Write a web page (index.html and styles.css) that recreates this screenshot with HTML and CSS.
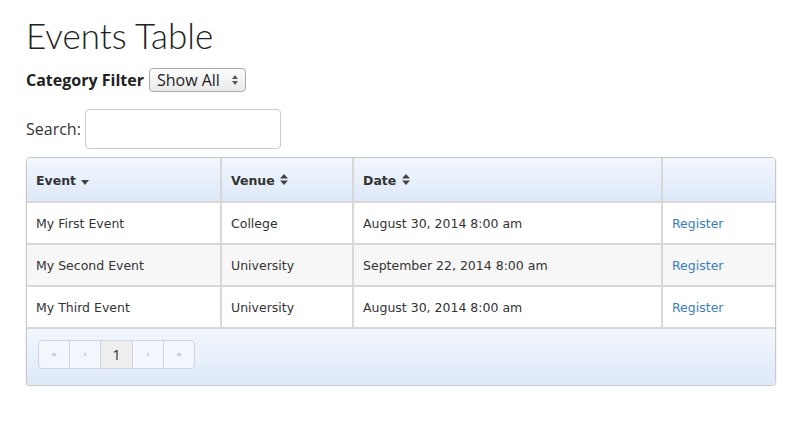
FILE: index.html
```html
<!DOCTYPE html>
<html lang="en">
<head>
    <meta charset="UTF-8">
    <title>Events Table</title>
    <link rel="stylesheet" href="styles.css">
</head>
<body>
    <h1>Events Table</h1>
    <div class="filtro">
        <label for="cat"><b>Category Filter</b></label>
        <span class="caixa">
            <select id="cat">
                <option>Show All</option>
            </select>
            <svg class="setas" width="6" height="10" viewBox="0 0 6 10"><path d="M0 4 L3 0 L6 4 Z M0 6 L3 10 L6 6 Z" fill="#555"/></svg>
        </span>
    </div>
    <div class="busca">
        <label for="q">Search:</label>
        <input type="text" id="q">
    </div>
    <div class="tabela">
        <table>
            <thead>
                <tr>
                    <th class="c1">Event <svg class="seta" width="8" height="5" viewBox="0 0 8 5"><path d="M0 0 L8 0 L4 5 Z" fill="#444"/></svg></th>
                    <th class="c2">Venue <svg class="seta" width="8" height="11" viewBox="0 0 8 11"><path d="M0 4.5 L4 0 L8 4.5 Z M0 6.5 L4 11 L8 6.5 Z" fill="#444"/></svg></th>
                    <th class="c3">Date <svg class="seta" width="8" height="11" viewBox="0 0 8 11"><path d="M0 4.5 L4 0 L8 4.5 Z M0 6.5 L4 11 L8 6.5 Z" fill="#444"/></svg></th>
                    <th class="c4"></th>
                </tr>
            </thead>
            <tbody>
                <tr>
                    <td>My First Event</td>
                    <td>College</td>
                    <td>August 30, 2014 8:00 am</td>
                    <td><a href="#">Register</a></td>
                </tr>
                <tr class="par">
                    <td>My Second Event</td>
                    <td>University</td>
                    <td>September 22, 2014 8:00 am</td>
                    <td><a href="#">Register</a></td>
                </tr>
                <tr>
                    <td>My Third Event</td>
                    <td>University</td>
                    <td>August 30, 2014 8:00 am</td>
                    <td><a href="#">Register</a></td>
                </tr>
            </tbody>
        </table>
        <div class="rodape">
            <ul class="paginas">
                <li class="off">&laquo;</li>
                <li class="off">&lsaquo;</li>
                <li class="ativa">1</li>
                <li class="off">&rsaquo;</li>
                <li class="off">&raquo;</li>
            </ul>
        </div>
    </div>
</body>
</html>
```

FILE: styles.css
```css
body {
    margin: 0;
    padding: 0 24px 0 26px;
    font-family: "Open Sans", sans-serif;
    font-size: 16px;
    color: #333;
    background-color: white;
}

h1 {
    margin: 15px 0 0 0;
    font-family: Lato, sans-serif;
    font-weight: 300;
    font-size: 35px;
    line-height: 40px;
    color: #222;
}

div.filtro {
    margin-top: 12px;
    display: flex;
    align-items: center;
    gap: 5px;
    height: 26px;
}

div.filtro b {
    font-weight: 700;
    color: #222;
}

span.caixa {
    position: relative;
    display: inline-block;
}

select {
    appearance: none;
    -webkit-appearance: none;
    font-family: "Open Sans", sans-serif;
    font-size: 16px;
    height: 24px;
    width: 97px;
    padding: 0 0 0 7px;
    border: 1px solid #aaa;
    border-radius: 4px;
    background: linear-gradient(#fdfdfd, #e9e9e9);
    color: #222;
    display: block;
}

svg.setas {
    position: absolute;
    right: 8px;
    top: 7px;
    pointer-events: none;
}

div.busca {
    margin-top: 16px;
    display: flex;
    align-items: center;
    gap: 4px;
}

input#q {
    width: 196px;
    height: 40px;
    box-sizing: border-box;
    border: 1px solid #ccc;
    border-radius: 4px;
}

div.tabela {
    margin-top: 8px;
    width: 748px;
    border: 1px solid #c8c8c8;
    border-radius: 4px;
    overflow: hidden;
    box-shadow: 0 1px 2px rgba(0, 0, 0, 0.15);
    font-family: "DejaVu Sans", Tahoma, sans-serif;
    font-size: 12.5px;
    color: #333;
}

table {
    width: 100%;
    border-collapse: collapse;
}

th, td {
    border: 2px solid #d8d8d8;
    padding: 0 9px;
    text-align: left;
}

tr > :first-child {
    border-left: none;
}

tr > :last-child {
    border-right: none;
}

thead tr {
    height: 44px;
}

thead th {
    border-top: none;
    background: linear-gradient(#f3f7fd, #dde9f9);
    font-weight: bold;
    font-size: 12.5px;
    padding-top: 2px;
}

th.c1 { width: 175px; }
th.c2 { width: 112px; }
th.c3 { width: 289px; }

tbody tr {
    height: 42px;
}

tbody td {
    padding-top: 1px;
}

tbody tr.par {
    background-color: #f7f7f7;
}

td a {
    color: #3a7dc0;
    text-decoration: none;
}

svg.seta {
    vertical-align: 0;
    margin-left: 1px;
}

div.rodape {
    height: 56px;
    box-sizing: border-box;
    background: linear-gradient(#f3f7fd, #dde9f9);
    display: flex;
    align-items: flex-start;
    padding: 11px 0 0 11px;
}

ul.paginas {
    list-style: none;
    margin: 0;
    padding: 0;
    display: flex;
    border: 1px solid #d0d4da;
    border-radius: 4px;
    overflow: hidden;
    background-color: #f3f7fd;
}

ul.paginas li {
    width: 30px;
    height: 27px;
    line-height: 27px;
    text-align: center;
    border-left: 1px solid #d0d4da;
    font-size: 9px;
    color: #aaa;
}

ul.paginas li:first-child {
    border-left: none;
}

ul.paginas li.ativa {
    width: 31px;
    background-color: #eeeeee;
    color: #333;
    font-family: "Open Sans", sans-serif;
    font-size: 15px;
}
```
